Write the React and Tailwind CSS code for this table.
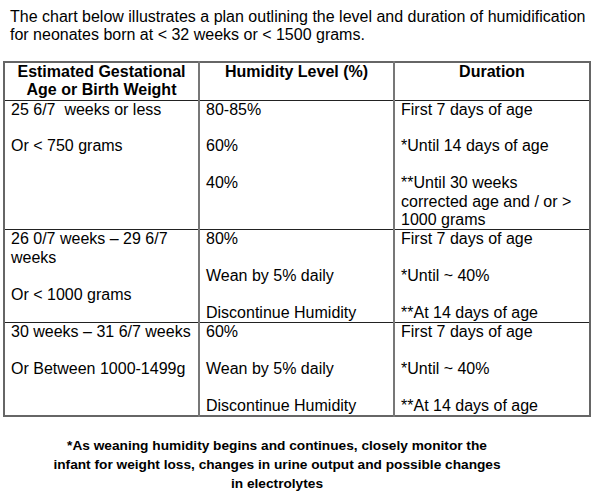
import React from "react";

const rows = [
  [
    ["25 6/7  weeks or less", "", "Or < 750 grams"],
    ["80-85%", "", "60%", "", "40%"],
    ["First 7 days of age", "", "*Until 14 days of age", "", "**Until 30 weeks", "corrected age and / or >", "1000 grams"],
  ],
  [
    ["26 0/7 weeks – 29 6/7", "weeks", "", "Or < 1000 grams"],
    ["80%", "", "Wean by 5% daily", "", "Discontinue Humidity"],
    ["First 7 days of age", "", "*Until ~ 40%", "", "**At 14 days of age"],
  ],
  [
    ["30 weeks – 31 6/7 weeks", "", "Or Between 1000-1499g"],
    ["60%", "", "Wean by 5% daily", "", "Discontinue Humidity"],
    ["First 7 days of age", "", "*Until ~ 40%", "", "**At 14 days of age"],
  ],
];

function Lines({ lines }) {
  return (
    <div>
      {lines.map((l, i) => (
        <div key={i} className="h-[18.4px] whitespace-pre">
          {l === "" ? "\u00a0" : l}
        </div>
      ))}
    </div>
  );
}

export default function App() {
  return (
    <div
      className="w-[608px] h-[495px] bg-white text-black overflow-hidden"
      style={{ fontFamily: '"Liberation Sans", Arial, sans-serif' }}
    >
      <div className="pt-[8px] pl-[10px] text-[16px] leading-[18.4px]">
        <div className="whitespace-nowrap">
          The chart below illustrates a plan outlining the level and duration of humidification
        </div>
        <div className="whitespace-nowrap">for neonates born at &lt; 32 weeks or &lt; 1500 grams.</div>
      </div>
      <table className="ml-[3px] mt-[16px] w-[586px] border-collapse border-2 border-[#666] text-[16px] leading-[18.4px] table-fixed">
        <colgroup>
          <col className="w-[195px]" />
          <col className="w-[195px]" />
          <col className="w-[196px]" />
        </colgroup>
        <thead>
          <tr className="border-b border-[#222]">
            <th className="border-r-2 border-[#777] align-top p-0 font-bold text-center">
              <div>Estimated Gestational</div>
              <div>Age or Birth Weight</div>
            </th>
            <th className="border-r-2 border-[#777] align-top p-0 font-bold text-center">
              Humidity Level (%)
            </th>
            <th className="align-top p-0 font-bold text-center">Duration</th>
          </tr>
        </thead>
        <tbody>
          {rows.map((r, ri) => (
            <tr key={ri} className={ri < rows.length - 1 ? "border-b border-[#222]" : ""}>
              {r.map((c, ci) => (
                <td
                  key={ci}
                  className={
                    "align-top pt-0 pb-0 font-normal " +
                    (ci < 2 ? "pl-[6px] border-r-2 border-[#777]" : "pl-[6px]")
                  }
                >
                  <Lines lines={c} />
                </td>
              ))}
            </tr>
          ))}
        </tbody>
      </table>
      <div className="mt-[19px] ml-[52px] w-[450px] text-center font-bold text-[13.7px] leading-[19px]">
        <div className="whitespace-nowrap">*As weaning humidity begins and continues, closely monitor the</div>
        <div className="whitespace-nowrap">infant for weight loss, changes in urine output and possible changes</div>
        <div className="whitespace-nowrap">in electrolytes</div>
      </div>
    </div>
  );
}
